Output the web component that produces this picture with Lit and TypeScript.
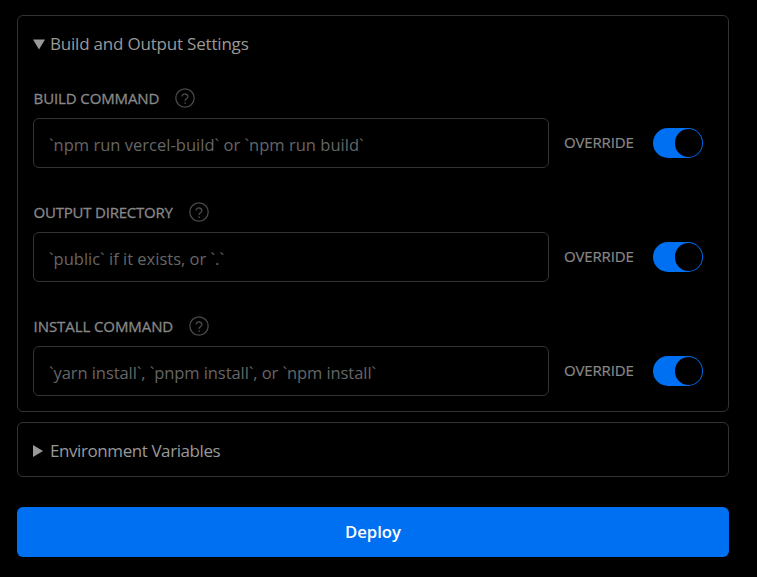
import { LitElement, html, css, svg } from "lit";
import { customElement, property } from "lit/decorators.js";

const helpIcon = svg`<svg class="help" width="20" height="20" viewBox="0 0 20 20" fill="none" stroke="#484848" stroke-width="1.3" stroke-linecap="round" stroke-linejoin="round">
  <circle cx="10" cy="10" r="9.2"></circle>
  <path d="M7.1 7.9a3 3 0 0 1 5.8.9c0 1.9-2.8 2.2-2.8 3.6"></path>
  <path d="M10.1 15v.1" stroke-width="1.7"></path>
</svg>`;

@customElement("setting-field")
export class SettingField extends LitElement {
  @property() label = "";
  @property() hint = "";

  static styles = css`
    :host { display: block; height: 78px; }
    .heading { display: flex; align-items: center; gap: 16px; height: 20px; margin-bottom: 10px; padding-left: 0.6px; }
    .label { color: #888; font-size: 15px; line-height: 20px; white-space: nowrap; letter-spacing: var(--label-track, 0); -webkit-text-stroke: 0.3px #888; }
    .help { display: block; flex: none; }
    .row { display: flex; align-items: center; height: 50px; }
    input {
      box-sizing: border-box; width: 516px; height: 50px; margin: 0; padding: 3px 16px 0 15px;
      background: #000; color: #fff; border: 1px solid #333; border-radius: 6px; outline: none;
      font: inherit; font-size: 16.5px; letter-spacing: var(--hint-track, 0);
    }
    input::placeholder { color: #666; opacity: 1; }
    .override { width: 89px; margin-left: 15px; padding-bottom: 1px; color: #888; font-size: 15px; line-height: 19px; letter-spacing: -0.15px; -webkit-text-stroke: 0.2px #888; }
    .toggle { box-sizing: border-box; display: flex; align-items: center; justify-content: flex-end; width: 50px; height: 30px; padding: 1px; border-radius: 15px; background: #0070f3; }
    .knob { width: 27.5px; height: 27.5px; border-radius: 50%; background: #000; }
  `;

  render() {
    return html`
      <div class="heading"><span class="label">${this.label}</span>${helpIcon}</div>
      <div class="row">
        <input placeholder=${this.hint} />
        <span class="override">OVERRIDE</span>
        <span class="toggle"><span class="knob"></span></span>
      </div>
    `;
  }
}

@customElement("app-root")
export class AppRoot extends LitElement {
  static styles = css`
    :host { display: block; box-sizing: border-box; height: 577px; padding: 15px 28px 0 17px; background: #000; font-family: "Open Sans", "Noto Sans", sans-serif; overflow: hidden; }
    .card { box-sizing: border-box; border: 1px solid #333; border-radius: 6px; padding: 0 15px; }
    .build { height: 397px; }
    .env { height: 55px; margin-top: 10px; }
    .summary { display: flex; align-items: center; height: 55px; color: #999; font-size: 17px; }
    .arrow { flex: none; width: 17px; height: 12px; fill: #999; }
    .fields { display: flex; flex-direction: column; gap: 36px; margin-top: 17px; }
    .build-title { letter-spacing: -0.2px; }
    .env-title { letter-spacing: -0.42px; }
    .f1 { --label-track: -0.12px; --hint-track: 0.02px; }
    .f2 { --label-track: -0.22px; --hint-track: 0px; }
    .f3 { --label-track: -0.08px; --hint-track: -0.07px; }
    .deploy { display: block; width: 100%; height: 50px; margin: 30px 0 0; padding: 0 0 2px; border: 0; border-radius: 6px; background: #0070f3; color: #fff; font: 600 16.7px "Open Sans", "Noto Sans", sans-serif; }
  `;

  render() {
    return html`
      <section class="card build">
        <div class="summary">
          <svg class="arrow" viewBox="0 0 17 12"><path d="M0 1.5h12L6 11.5z"></path></svg>
          <span class="build-title">Build and Output Settings</span>
        </div>
        <div class="fields">
          <setting-field class="f1" label="BUILD COMMAND" hint="\`npm run vercel-build\` or \`npm run build\`"></setting-field>
          <setting-field class="f2" label="OUTPUT DIRECTORY" hint="\`public\` if it exists, or \`.\`"></setting-field>
          <setting-field class="f3" label="INSTALL COMMAND" hint="\`yarn install\`, \`pnpm install\`, or \`npm install\`"></setting-field>
        </div>
      </section>
      <section class="card env">
        <div class="summary">
          <svg class="arrow" viewBox="0 0 17 12"><path d="M0 0v12l10-6z"></path></svg>
          <span class="env-title">Environment Variables</span>
        </div>
      </section>
      <button class="deploy">Deploy</button>
    `;
  }
}
